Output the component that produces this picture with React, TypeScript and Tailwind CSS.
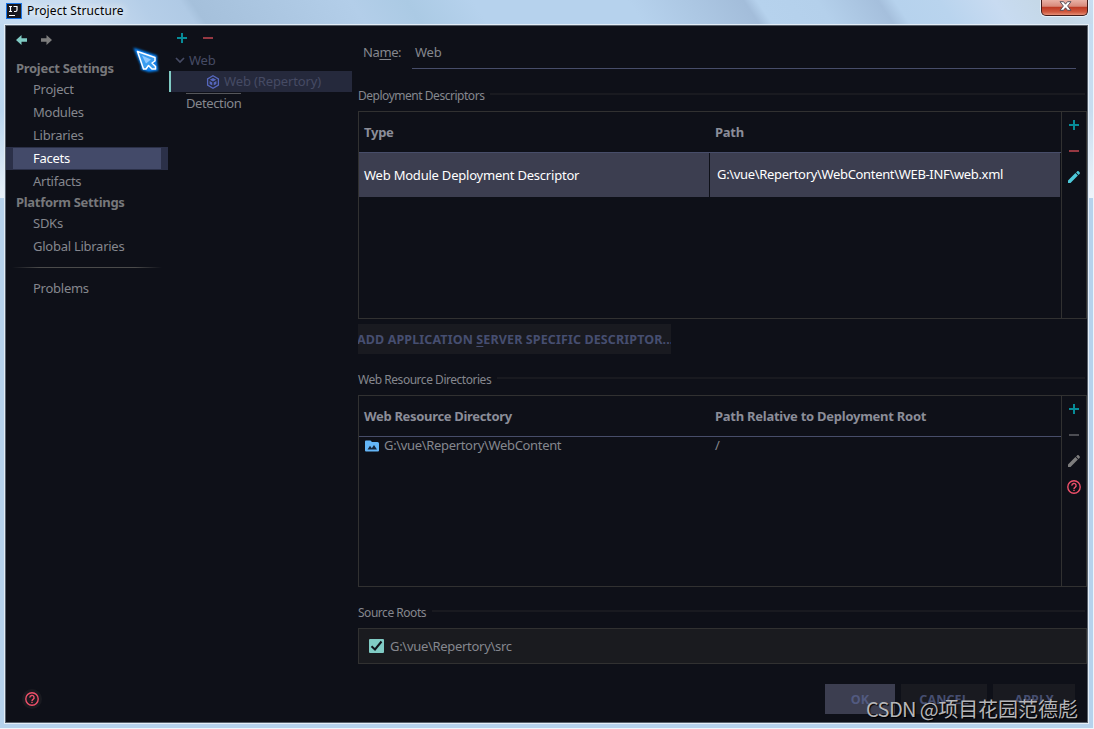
import type { ReactNode } from 'react';

const NAV = [
  { title: 'Project Settings', items: ['Project', 'Modules', 'Libraries', 'Facets', 'Artifacts'] },
  { title: 'Platform Settings', items: ['SDKs', 'Global Libraries'] },
];

function Plus() {
  return (
    <svg className="w-[10px] h-[10px] block" viewBox="0 0 10 10" fill="none" stroke="#078c98" strokeWidth="2">
      <path d="M5 0v10M0 5h10" />
    </svg>
  );
}

function Minus({ color = '#963842' }: { color?: string }) {
  return (
    <svg className="w-[10px] h-[2px] block" viewBox="0 0 10 2">
      <path d="M0 0h10v2H0z" fill={color} />
    </svg>
  );
}

function Pencil({ color }: { color: string }) {
  return (
    <svg className="w-[12px] h-[12px] block" viewBox="0 0 12 12" fill={color}>
      <path d="M0 9.5L7.4 2.1l2.5 2.5L2.5 12H0zM8.1 1.4L9.3.3c.4-.4.9-.4 1.3 0l1.1 1.1c.4.4.4.9 0 1.3l-1.1 1.2z" />
    </svg>
  );
}

function Help() {
  return (
    <svg className="w-[14px] h-[14px] block" viewBox="0 0 14 14" fill="none" stroke="#f0506a" strokeWidth="1.4">
      <circle cx="7" cy="7" r="6.2" />
      <path d="M4.9 5.6a2.1 2.1 0 1 1 3.2 1.700C7.300 7.800 7 8.100 7 8.900M7 9.700v1.400" />
    </svg>
  );
}

function Arrow({ color, flip }: { color: string; flip?: boolean }) {
  return (
    <svg className={flip ? 'w-[11px] h-[10px] rotate-180' : 'w-[11px] h-[10px]'} viewBox="0 0 11 10" fill={color}>
      <path d="M0 5L5.500 0v3.200H11v3.600H5.500V10z" />
    </svg>
  );
}

function Cursor() {
  return (
    <svg className="absolute left-[128px] top-[40px] w-[38px] h-[38px]" viewBox="0 0 38 38">
      <defs>
        <filter id="glow" x="-50%" y="-50%" width="200%" height="200%">
          <feGaussianBlur stdDeviation="1.3" />
        </filter>
      </defs>
      <path d="M9 11l18 6v5l1 7-7 1-6-2v-3z" fill="none" stroke="#0787ff" strokeWidth="4" filter="url(#glow)" />
      <path d="M9.500 11.500L27 18v4l-2 1.500 2.500 3v3L17 29l-1-1v-2.500z" fill="#1685e8" />
      <path
        d="M9.500 11.500L27 17.500v3.500l-3 2 3.500 3.500V29H24l-3.500-3.500L18 29h-2.500z"
        fill="#3a9df0"
        stroke="#fff"
        strokeWidth="1.5"
        strokeLinejoin="round"
      />
      <path d="M14 15.500l9 4-5 4z" fill="#8fc9ff" />
    </svg>
  );
}

function SectionTitle({ children }: { children: ReactNode }) {
  return (
    <div className="h-[16px] flex items-center pr-[2px] text-[12px]">
      <span className="pt-px whitespace-nowrap text-[#85878e] tracking-[-0.47px]">{children}</span>
      <span className="ml-[6px] flex-1 h-[2px] mb-[2px] bg-[#191a20]" />
    </div>
  );
}

function Toolbar({ children }: { children: ReactNode }) {
  return <div className="w-[25px] border-l border-[#313131] flex flex-col items-center">{children}</div>;
}

function Slot({ children }: { children: ReactNode }) {
  return <div className="h-[26px] w-full flex items-center justify-center">{children}</div>;
}

export default function App() {
  return (
    <div className="relative w-[1094px] h-[729px] overflow-hidden flex flex-col bg-[#b6d2ec] font-['Noto_Sans','Noto_Sans_CJK_SC',sans-serif] text-[13px] text-[#85878e] leading-[18px] tracking-[-0.26px]">
      {/* window frame */}
      <div className="h-[24px] shrink-0 flex items-start pl-[6px] bg-[linear-gradient(56deg,#c3daf0_0%,#c9dcf0_8%,#b5cee8_14%,#b0cae5_17.6%,#a5c0db_18.6%,#b3cee9_33%,#abcae4_38%,#b6d2ed_44%,#b6d2ed_58%,#a3bdda_68.4%,#b6d2ed_69.6%,#b4d0eb_75%,#a5bfdc_80.5%,#b6d2ed_82%,#b9d4ee_86%,#c8dbf1_91%,#c4d7e5_96%,#c8def2_100%)]">
        <div className="mt-[3px] w-[16px] h-[16px] bg-[#17171d] border border-[#1874e8]">
          <svg className="w-[14px] h-[14px] block" viewBox="0 0 14 14" stroke="#fff" fill="none">
            <path d="M2 2.500h3M3.500 2.500v5M2 7.500h3M6.500 2.500H10v3.500q0 1.500-1.500 1.500h-1.500" strokeWidth="1.2" />
            <path d="M2 11.500h6" />
          </svg>
        </div>
        <span className="ml-[5px] mt-[2px] text-black text-[12px] tracking-[0.12px] [text-shadow:0_0_8px_#fff,0_0_8px_#fff]">Project Structure</span>
      </div>
      <div className="absolute left-[1041px] top-0 w-[47px] h-[16px] rounded-b-[5px] border border-t-0 border-[#431c1a] bg-[linear-gradient(#e9b1a5_0%,#d88a7b_42%,#bd3a24_48%,#d0593f_80%,#e59077_100%)] shadow-[0_0_0_1px_#e6eef6]">
        <svg className="ml-[17px] mt-[1px] w-[13px] h-[10px]" viewBox="0 0 13 10">
          <path d="M1 .7h3.500l2 2.500 2-2.500H12L8.600 5l3.400 4.300H8.500l-2-2.500-2 2.500H1L4.400 5z" fill="#fff" stroke="#4b4552" strokeWidth=".9" />
        </svg>
      </div>
      <div className="absolute left-0 top-[24px] w-[5px] h-[174px] bg-[linear-gradient(#c0d9f0,#b9d5ee_50%,#e8f1f9)]" />
      <div className="absolute left-[1088px] top-[24px] w-[6px] h-[174px] bg-[linear-gradient(#c5dcf1,#c8dcef_50%,#eef4fa)]" />
      <div className="absolute right-0 top-0 w-px h-full bg-[#edf5fc]" />
      <div className="absolute left-0 bottom-0 w-full h-px bg-[#f0f6fb]" />

      <div className="relative ml-[4px] w-[1085px] h-[700px] shrink-0 border border-[#e4eef7]">
        <div className="h-[698px] border border-[#58616c] bg-[#0e1018] flex">
          {/* settings list */}
          <div className="w-[162px] shrink-0 flex flex-col">
            <div className="h-[33px] shrink-0 flex items-start pl-[10px] pt-[9px] gap-[14px]">
              <Arrow color="#80cbc4" />
              <Arrow color="#7d7d7d" flip />
            </div>
            {NAV.map(group => (
              <div key={group.title}>
                <div className="h-[19px] pb-[2px] pl-[10px] flex items-center font-bold text-[#77787b] whitespace-nowrap tracking-[-0.3px]">{group.title}</div>
                {group.items.map(item => (
                  <div
                    key={item}
                    className={
                      item === 'Facets'
                        ? 'h-[23px] py-px pl-[7px] pr-[7px] bg-[#2b3048] text-white'
                        : 'h-[23px] py-px pl-[7px] pr-[7px]'
                    }
                  >
                    <div className={item === 'Facets' ? 'h-[21px] pb-[2px] pl-[20px] flex items-center bg-[#434a69]' : 'h-[21px] pb-[2px] pl-[20px] flex items-center'}>
                      {item}
                    </div>
                  </div>
                ))}
              </div>
            ))}
            <div className="mt-[9px] mx-[6px] h-px shrink-0 bg-[linear-gradient(90deg,transparent,#4b4b4b_18%,#4b4b4b_82%,transparent)]" />
            <div className="mt-[9px] h-[23px] pb-[2px] shrink-0 pl-[27px] flex items-center">Problems</div>
            <div className="mt-auto mb-[13px] ml-[16px] w-[20px] h-[20px] shrink-0 rounded-full bg-[#191a20] flex items-center justify-center">
              <Help />
            </div>
          </div>

          {/* facets tree */}
          <div className="ml-[1px] w-[183px] shrink-0 text-[#464b64]">
            <div className="h-[24px] flex items-center pl-[8px] gap-[16px]">
              <Plus />
              <Minus />
            </div>
            <div className="h-[21px] flex items-center pl-[6px]">
              <svg className="w-[10px] h-[8px] mb-px" viewBox="0 0 10 8" fill="none" stroke="#464b64" strokeWidth="1.7">
                <path d="M1 2l4 4 4-4" />
              </svg>
              <span className="ml-[4px] mb-[2px]">Web</span>
            </div>
            <div className="h-[21px] flex items-center pl-[35px] bg-[#25293c] border-l-2 border-[#80cbc4]">
              <svg className="w-[14px] h-[14px]" viewBox="0 0 14 14" fill="none" stroke="#5667bd" strokeWidth="1.3">
                <path d="M7 .8l5.400 3.100v6.200L7 13.200l-5.400-3.100V3.900z" />
                <path d="M7 3l3.200 1.800L7 6.600 3.800 4.800zM3.600 6l2.700 1.600v3L3.600 9zM10.400 6L7.700 7.600v3L10.400 9z" fill="#5667bd" stroke="none" />
              </svg>
              <span className="ml-[4px] mb-[2px] whitespace-nowrap tracking-[-0.14px]">Web (Repertory)</span>
            </div>
            <div className="mt-[1px] ml-[17px] w-[55px] border-t border-[#55565a] text-[#85878e]">
              <span className="block tracking-[-0.4px]">Detection</span>
            </div>
          </div>

          {/* facet editor */}
          <div className="ml-[6px] flex-1 min-w-0">
            <div className="pt-[12px] pl-[5px] pr-[11px] flex">
              <span className="w-[49px] pt-[5px] tracking-[-0.4px]">Na<span className="underline underline-offset-2">m</span>e:</span>
              <div className="flex-1 h-[31px] border-b border-[#474d69] pt-[5px] pl-[3px]">Web</div>
            </div>
            <div className="mt-[18px]">
              <SectionTitle>Deployment Descriptors</SectionTitle>
            </div>
            <div className="mt-[8px] h-[208px] border border-[#313131] flex">
              <div className="flex-1">
                <div className="h-[41px] border-b border-[#474d69] flex items-center font-bold text-[#8b8d98]">
                  <span className="w-[351px] pl-[5px]">Type</span>
                  <span className="pl-[5px]">Path</span>
                </div>
                <div className="h-[44px] mr-[1px] flex items-center text-white">
                  <div className="w-[350px] h-full pl-[5px] pb-px flex items-center bg-[#3c3e50] tracking-[-0.22px]">Web Module Deployment Descriptor</div>
                  <div className="ml-px flex-1 h-full pl-[7px] pb-[2px] flex items-center bg-[#3c3e50] tracking-[-0.33px]">G:\vue\Repertory\WebContent\WEB-INF\web.xml</div>
                </div>
              </div>
              <Toolbar>
                <Slot><Plus /></Slot>
                <Slot><Minus /></Slot>
                <Slot><Pencil color="#4dc8d9" /></Slot>
              </Toolbar>
            </div>
            <button className="mt-[5px] w-[313px] h-[30px] overflow-hidden bg-[#191a20] flex items-center font-bold text-[#464e70] whitespace-nowrap text-[12.5px] tracking-[0.12px]">
              <span className="-ml-px pt-[2px]">ADD APPLICATION <span className="underline underline-offset-2">S</span>ERVER SPECIFIC DESCRIPTOR...</span>
            </button>
            <div className="mt-[17px]">
              <SectionTitle>Web Resource Directories</SectionTitle>
            </div>
            <div className="mt-[8px] h-[192px] border border-[#313131] flex">
              <div className="flex-1">
                <div className="h-[41px] border-b border-[#474d69] flex items-center font-bold text-[#8b8d98]">
                  <span className="w-[351px] pl-[5px] tracking-[-0.32px]">Web Resource Directory</span>
                  <span className="pl-[5px]">Path Relative to Deployment Root</span>
                </div>
                <div className="h-[18px] flex items-center">
                  <div className="w-[351px] pl-[6px] flex items-center">
                    <svg className="w-[14px] h-[12px] mb-px" viewBox="0 0 14 12">
                      <path d="M1 .5h4.500L7 2h5.500q1.500 0 1.500 1.500v7q0 1-1 1H1q-1 0-1-1v-9q0-1 1-1z" fill="#64b5f6" />
                      <path d="M2.500 9.500L5 5.800l1.800 2.500L9 5l3 4.500z" fill="#14243a" />
                    </svg>
                    <span className="ml-[5px] mb-[2px] tracking-[-0.33px]">G:\vue\Repertory\WebContent</span>
                  </div>
                  <span className="pl-[5px] mb-[2px]">/</span>
                </div>
              </div>
              <Toolbar>
                <Slot><Plus /></Slot>
                <Slot><Minus color="#4c4d53" /></Slot>
                <Slot><Pencil color="#7d7d7d" /></Slot>
                <Slot><Help /></Slot>
              </Toolbar>
            </div>
            <div className="mt-[17px]">
              <SectionTitle>Source Roots</SectionTitle>
            </div>
            <div className="mt-[8px] h-[36px] border border-[#313131] bg-[#1a1b1f] flex items-center pl-[10px]">
              <svg className="w-[15px] h-[14px]" viewBox="0 0 15 14">
                <rect width="15" height="14" rx="1" fill="#80cbc4" />
                <path d="M2.500 7.200l3.500 3.300 6.500-8" fill="none" stroke="#10131b" strokeWidth="2" />
              </svg>
              <span className="ml-[6px] tracking-[-0.3px]">G:\vue\Repertory\src</span>
            </div>
            <div className="mt-[20px] pr-[12px] flex justify-end gap-[6px] font-bold text-[#464e70] text-[12.5px] tracking-[0.1px]">
              <button className="w-[70px] h-[30px] pt-[2px] bg-[#3c3e50] text-[#525a80]">OK</button>
              <button className="w-[86px] h-[30px] pt-[2px] bg-[#191a20]">CANCEL</button>
              <button className="w-[82px] h-[30px] pt-[2px] bg-[#191a20]">APPLY</button>
            </div>
          </div>
        </div>
      </div>

      <Cursor />
      <div className="absolute left-[866px] top-[695px] h-[28px] leading-[28px] whitespace-nowrap font-['Noto_Sans_CJK_SC',sans-serif] text-[20px] text-[#b6b6b9] tracking-[-0.04px] [text-shadow:1px_1px_1px_#000]">
        <span className="tracking-[-0.6px]">CSDN @</span>项目花园范德彪
      </div>
    </div>
  );
}
